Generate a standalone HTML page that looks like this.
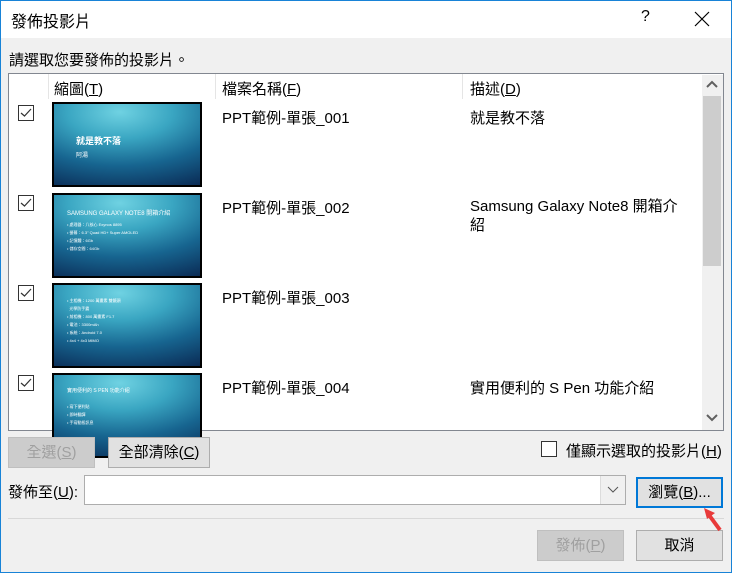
<!DOCTYPE html>
<html><head><meta charset="utf-8"><style>
*{margin:0;padding:0;box-sizing:border-box}
body{width:732px;height:573px;overflow:hidden;background:#f0f0f0;font-family:"Liberation Sans","Noto Sans CJK TC",sans-serif;font-size:15px;color:#000;position:relative}
.a{position:absolute}
.win{left:0;top:0;width:732px;height:573px;border:1px solid #1883d7}
.title{left:1px;top:1px;width:730px;height:37px;background:#fff}
.btn{position:absolute;background:#e1e1e1;border:1px solid #adadad;text-align:center;line-height:29px}
.dis{color:#a0a0a0;background:#cccccc;border-color:#bfbfbf}
.cb{position:absolute;width:16px;height:16px;border:1px solid #333;background:#fff}
.thumb{position:absolute;left:52px;width:150px;height:85px;border:2px solid #000;background:radial-gradient(ellipse 120% 110% at 45% 10%,#6fd2e2 0%,#3aa6c2 30%,#176590 60%,#08204a 100%);overflow:hidden;color:#fff;font-size:6px}
u{text-decoration:underline}
</style></head><body>
<div class="a win"></div>
<div class="a title"></div>
<div class="a" style="left:11px;top:8px;font-size:16px">發佈投影片</div>
<div class="a" style="left:641px;top:8px;font-size:16px">?</div>
<svg class="a" style="left:694px;top:11px" width="16" height="16"><path d="M1 1L15 15M15 1L1 15" stroke="#000" stroke-width="1.2"/></svg>
<div class="a" style="left:9px;top:49px">請選取您要發佈的投影片。</div>
<div class="a" style="left:8px;top:73px;width:716px;height:358px;background:#fff;border:1px solid #828790;overflow:hidden">
 <div class="a" style="left:39px;top:0;width:1px;height:25px;background:#e5e5e5"></div>
 <div class="a" style="left:206px;top:0;width:1px;height:25px;background:#e5e5e5"></div>
 <div class="a" style="left:453px;top:0;width:1px;height:25px;background:#e5e5e5"></div>
 <div class="a" style="left:45px;top:4px">縮圖(<u>T</u>)</div>
 <div class="a" style="left:213px;top:4px">檔案名稱(<u>F</u>)</div>
 <div class="a" style="left:461px;top:4px">描述(<u>D</u>)</div>
 <div class="a" style="left:693px;top:1px;width:21px;height:355px;background:#f0f0f0"></div>
 <div class="a" style="left:694px;top:22px;width:18px;height:170px;background:#cdcdcd"></div>
 <svg class="a" style="left:697px;top:6px" width="12" height="10"><path d="M1 7L6 2L11 7" stroke="#606060" stroke-width="2" fill="none"/></svg>
 <svg class="a" style="left:697px;top:339px" width="12" height="10"><path d="M1 2L6 7L11 2" stroke="#606060" stroke-width="2" fill="none"/></svg>
</div>
<div class="cb" style="left:18px;top:105px"></div>
<div class="cb" style="left:18px;top:195px"></div>
<div class="cb" style="left:18px;top:285px"></div>
<div class="cb" style="left:18px;top:375px"></div>
<svg class="a" style="left:18px;top:105px" width="16" height="300"><g stroke="#333" stroke-width="1.2" fill="none"><path d="M3 8L6.5 11L13 4"/><path d="M3 98L6.5 101L13 94"/><path d="M3 188L6.5 191L13 184"/><path d="M3 278L6.5 281L13 274"/></g></svg>
<div class="thumb" style="top:102px"><div class="a" style="left:22px;top:30px;font-size:9px;font-weight:bold">就是教不落</div><div class="a" style="left:22px;top:46px;font-size:6px">阿湯</div></div>
<div class="thumb" style="top:193px"><div class="a" style="left:13px;top:13px">SAMSUNG GALAXY NOTE8 開箱介紹</div><div class="a" style="left:13px;top:26px;line-height:8px;font-size:4px">• 處理器：八核心 Exynos 8895<br>• 螢幕：6.3" Quad HD+ Super AMOLED<br>• 記憶體：6Gb<br>• 儲存空間：64Gb</div></div>
<div class="thumb" style="top:283px"><div class="a" style="left:13px;top:12px;line-height:8px;font-size:4px">• 主相機：1200 萬畫素 雙鏡頭<br>&nbsp;&nbsp;光學防手震<br>• 前相機：800 萬畫素 F1.7<br>• 電池：3300mAh<br>• 系統：Android 7.0<br>• 4x4 + 4x3 MIMO</div></div>
<div class="thumb" style="top:373px"><div class="a" style="left:13px;top:12px;font-size:5px">實用便利的 S PEN 功能介紹</div><div class="a" style="left:13px;top:28px;line-height:8px;font-size:4px">• 寫下便利貼<br>• 即時翻譯<br>• 手寫動態訊息</div></div>
<div class="a" style="left:222px;top:107px">PPT範例-單張_001</div>
<div class="a" style="left:222px;top:197px">PPT範例-單張_002</div>
<div class="a" style="left:222px;top:287px">PPT範例-單張_003</div>
<div class="a" style="left:222px;top:377px">PPT範例-單張_004</div>
<div class="a" style="left:470px;top:107px">就是教不落</div>
<div class="a" style="left:470px;top:197px;width:222px;line-height:19px">Samsung Galaxy Note8 開箱介紹</div>
<div class="a" style="left:470px;top:377px">實用便利的 S Pen 功能介紹</div>
<div class="btn dis" style="left:8px;top:437px;width:87px;height:31px">全選(<u>S</u>)</div>
<div class="btn" style="left:108px;top:437px;width:102px;height:31px">全部清除(<u>C</u>)</div>
<div class="cb" style="left:541px;top:441px"></div>
<div class="a" style="left:566px;top:440px">僅顯示選取的投影片(<u>H</u>)</div>
<div class="a" style="left:8px;top:481px">發佈至(<u>U</u>):</div>
<div class="a" style="left:84px;top:475px;width:542px;height:30px;background:#fff;border:1px solid #adadad"></div>
<div class="a" style="left:600px;top:476px;width:25px;height:28px;background:#f0f0f0;border-left:1px solid #dcdcdc"></div>
<svg class="a" style="left:607px;top:486px" width="12" height="8"><path d="M1 1L6 6L11 1" stroke="#555" fill="none"/></svg>
<div class="btn" style="left:636px;top:477px;width:87px;height:31px;border:2px solid #0078d7;line-height:27px">瀏覽(<u>B</u>)...</div>
<div class="a" style="left:8px;top:518px;width:716px;height:1px;background:#d8d8d8"></div>
<div class="btn dis" style="left:537px;top:530px;width:87px;height:31px">發佈(<u>P</u>)</div>
<div class="btn" style="left:636px;top:530px;width:87px;height:31px">取消</div>
<svg class="a" style="left:700px;top:503px" width="24" height="30"><path d="M20 27L9 12" stroke="#e83a3a" stroke-width="4"/><path d="M4 5L15 10L7 16Z" fill="#e83a3a"/></svg>
</body></html>
